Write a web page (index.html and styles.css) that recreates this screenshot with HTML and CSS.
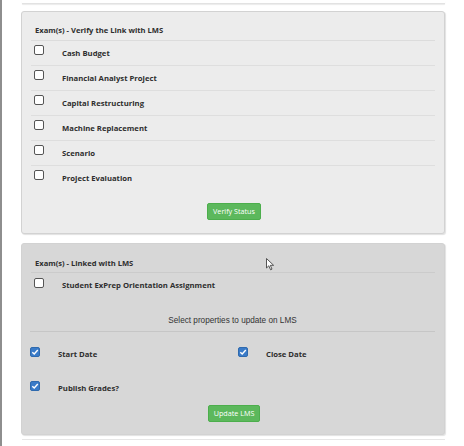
FILE: index.html
```html
<!DOCTYPE html>
<html>
<head>
<meta charset="utf-8">
<link rel="stylesheet" href="styles.css">
</head>
<body>
<div class="page">
  <div class="prev-panel"></div>

  <section class="panel panel-light">
    <div class="panel-heading">Exam(s) - Verify the Link with LMS</div>
    <div class="row"><span class="cb"></span><span class="label">Cash Budget</span></div>
    <div class="row"><span class="cb"></span><span class="label">Financial Analyst Project</span></div>
    <div class="row"><span class="cb"></span><span class="label">Capital Restructuring</span></div>
    <div class="row"><span class="cb"></span><span class="label">Machine Replacement</span></div>
    <div class="row"><span class="cb"></span><span class="label">Scenario</span></div>
    <div class="row last"><span class="cb"></span><span class="label">Project Evaluation</span></div>
    <div class="actions"><button class="btn">Verify Status</button></div>
  </section>

  <section class="panel panel-dark">
    <div class="panel-heading h2">Exam(s) - Linked with LMS</div>
    <div class="row single"><span class="cb"></span><span class="label">Student ExPrep Orientation Assignment</span></div>
    <div class="props-title">Select properties to update on LMS</div>
    <div class="props">
      <div class="prop"><span class="cb checked"><svg viewBox="0 0 10 10" width="10" height="10"><path d="M2.3 5.2 L4.2 7 L7.8 3" fill="none" stroke="#fff" stroke-width="1.4"/></svg></span><span class="label">Start Date</span></div>
      <div class="prop"><span class="cb checked"><svg viewBox="0 0 10 10" width="10" height="10"><path d="M2.3 5.2 L4.2 7 L7.8 3" fill="none" stroke="#fff" stroke-width="1.4"/></svg></span><span class="label">Close Date</span></div>
      <div class="prop"><span class="cb checked"><svg viewBox="0 0 10 10" width="10" height="10"><path d="M2.3 5.2 L4.2 7 L7.8 3" fill="none" stroke="#fff" stroke-width="1.4"/></svg></span><span class="label">Publish Grades?</span></div>
    </div>
    <div class="actions a2"><button class="btn">Update LMS</button></div>
    <svg class="cursor" viewBox="0 0 10 13" width="10" height="13"><path d="M0.5 0.5 L0.5 10 L2.8 7.8 L4.6 11.8 L6 11.1 L4.3 7.3 L7.6 7.3 Z" fill="#fff" stroke="#444" stroke-width="0.9" stroke-linejoin="round"/></svg>
  </section>

  <div class="next-panel"></div>
</div>
</body>
</html>
```

FILE: styles.css
```css
html, body {
  margin: 0;
  padding: 0;
  background: #fff;
}
body {
  width: 464px;
  height: 446px;
  overflow: hidden;
  border-left: 2px solid #8e8e8e;
  box-sizing: border-box;
  font-family: "Open Sans", "Liberation Sans", sans-serif;
  color: #333;
}
.page {
  padding-left: 19px;
  width: 424px;
}
.prev-panel {
  height: 3px;
  margin-left: 1px;
  background: #fff;
  border-bottom: 1px solid #e2e2e2;
  box-shadow: 0 1px 1px rgba(0,0,0,0.08);
  margin-bottom: 7px;
}
.panel {
  position: relative;
  border: 1px solid #d2d2d2;
  border-radius: 3px;
  box-shadow: 1px 1px 1px rgba(0,0,0,0.12);
  padding: 0 9px;
  width: 424px;
  box-sizing: border-box;
}
.panel-light {
  background: #ececec;
  padding-bottom: 13px;
  margin-bottom: 9px;
}
.panel-dark {
  background: #d7d7d7;
  padding-bottom: 12px;
}
.panel-heading {
  font-size: 7.6px;
  font-weight: 700;
  line-height: 12px;
  padding: 12px 4px 4px;
  border-bottom: 1px solid #dcdcdc;
  color: #2e2e2e;
}
.panel-heading.h2 {
  padding: 13px 4px 3px;
  border-bottom-color: #cbcbcb;
}
.row {
  display: flex;
  align-items: flex-start;
  height: 24px;
  border-bottom: 1px solid #dedede;
  padding-left: 3px;
}
.row.last {
  border-bottom: none;
}
.row.single {
  height: 30px;
  border-bottom: none;
}
.cb {
  flex: none;
  width: 10px;
  height: 10px;
  box-sizing: border-box;
  border: 1.5px solid #555;
  border-radius: 2px;
  background: #fff;
  margin-top: 4px;
  margin-right: 18px;
}
.row.single .cb {
  margin-top: 5px;
}
.label {
  font-size: 7.7px;
  font-weight: 700;
  line-height: 12px;
  padding-top: 6px;
  color: #2e2e2e;
}
.row.single .label {
  padding-top: 6px;
}
.props-title {
  font-family: "Liberation Sans", Arial, sans-serif;
  font-size: 8.2px;
  line-height: 12px;
  text-align: center;
  padding: 12px 0 4px;
  border-bottom: 1px solid #c6c6c6;
  color: #333;
  margin-left: -1px;
}
.props {
  display: grid;
  grid-template-columns: 208px 1fr;
  row-gap: 21px;
  padding-top: 15px;
  margin-left: -1px;
}
.prop {
  display: flex;
  align-items: flex-start;
  height: 13px;
}
.cb.checked {
  margin-top: 0;
  background: #3a7bc8;
  border: 1px solid #2f6aae;
  display: flex;
  align-items: center;
  justify-content: center;
}
.cb.checked svg {
  display: block;
  flex: none;
}
.prop .label {
  padding-top: 1px;
}
.actions {
  display: flex;
  justify-content: center;
  margin-top: 13px;
}
.a2 {
  margin-top: 11px;
}
.btn {
  font-family: "Open Sans", "Liberation Sans", sans-serif;
  font-size: 7.2px;
  color: #fff;
  background: #5cb85c;
  border: 1px solid #4cae4c;
  border-radius: 2px;
  height: 17px;
  padding: 0 5px;
  line-height: 15px;
  margin-left: 2px;
}
.cursor {
  position: absolute;
  left: 244px;
  top: 14px;
}
.next-panel {
  margin-top: 4px;
  height: 6px;
  border-top: 1px solid #e6e6e6;
  margin-left: 1px;
}
```
